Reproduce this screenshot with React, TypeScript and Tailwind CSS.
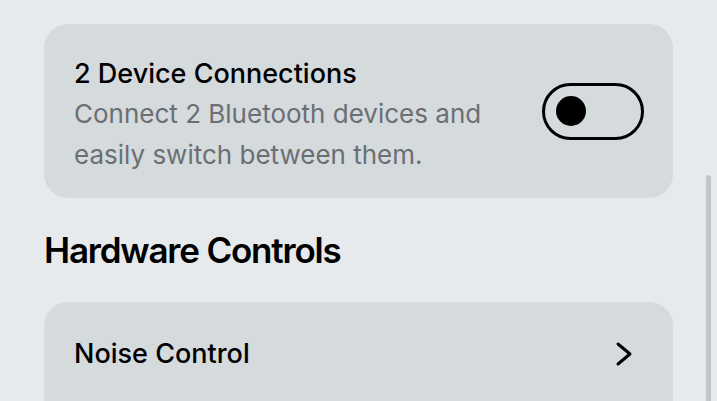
import React from "react";

export default function App() {
  return (
    <div className="relative w-[717px] h-[401px] overflow-hidden bg-[#e6eaed] font-['Inter','Noto_Sans',sans-serif] text-black">
      <div className="pl-[44px] pt-[24px] w-[673px]">
        <div className="relative h-[174px] rounded-[24px] bg-[#d5dadd] pl-[30px] pr-[29px] pt-[32px] flex items-start justify-between">
          <div className="flex flex-col">
            <div className="text-[27px] leading-[36px] font-medium">2 Device Connections</div>
            <div className="mt-[1px] text-[26px] leading-[41px] text-[#6b6f74]">
              Connect 2 Bluetooth devices and
              <br />
              easily switch between them.
            </div>
          </div>
          <div className="self-center mt-[-32px] w-[102px] h-[57px] rounded-full border-[3px] border-black flex items-center pl-[11px]">
            <div className="w-[30px] h-[30px] rounded-full bg-black" />
          </div>
        </div>
        <div className="mt-[30px] text-[35px] leading-[44px] font-semibold tracking-[-1.2px]">Hardware Controls</div>
        <div className="mt-[30px] rounded-[24px] bg-[#d5dadd] h-[140px]">
          <div className="h-[103px] pl-[30px] pr-[40px] flex items-center justify-between">
            <div className="text-[27px] leading-[32px] font-medium">Noise Control</div>
            <svg width="18" height="26" viewBox="0 0 18 26" fill="none">
              <polyline points="3,3 15,13 3,23" stroke="black" strokeWidth="3" strokeLinecap="round" strokeLinejoin="round" />
            </svg>
          </div>
        </div>
      </div>
      <div className="absolute left-[706px] top-[175px] w-[5px] h-[240px] rounded-full bg-[#c4c5c6]" />
    </div>
  );
}
